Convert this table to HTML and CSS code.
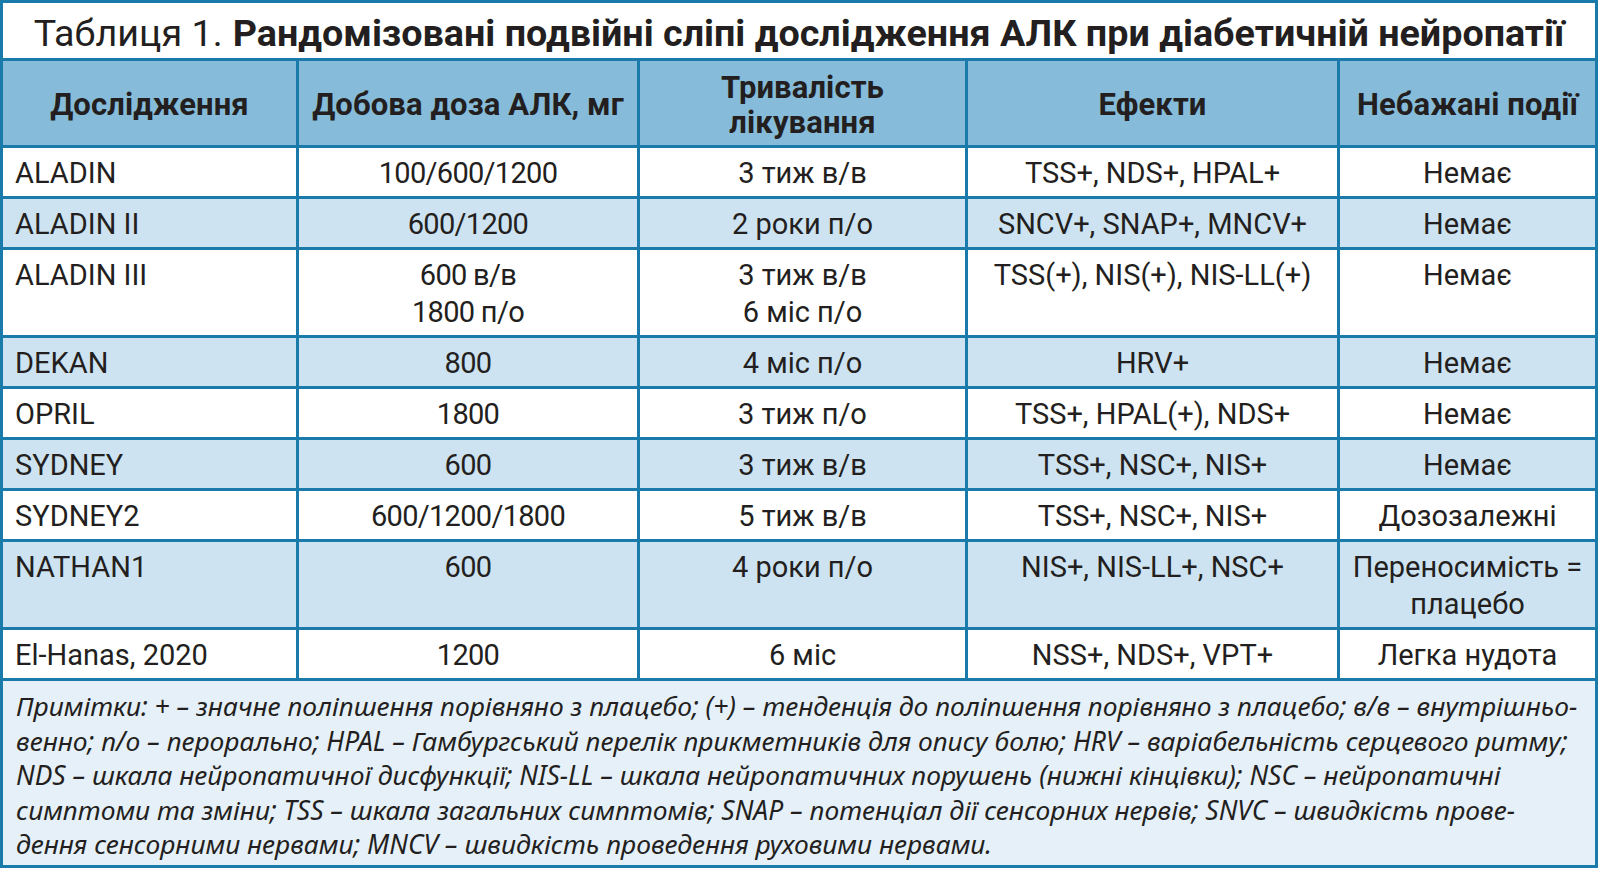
FILE: index.html
```html
<!DOCTYPE html>
<html lang="uk">
<head>
<meta charset="utf-8">
<title>Таблиця 1</title>
<link rel="stylesheet" href="styles.css">
</head>
<body>
<div class="tbl">
  <div class="title"><span class="reg">Таблиця 1.</span> <b>Рандомізовані подвійні сліпі дослідження АЛК при діабетичній нейропатії</b></div>

  <div class="h">Дослідження</div>
  <div class="h">Добова доза АЛК, мг</div>
  <div class="h">Тривалість<br>лікування</div>
  <div class="h">Ефекти</div>
  <div class="h">Небажані події</div>

  <div class="c l">ALADIN</div>
  <div class="c num">100/600/1200</div>
  <div class="c">3 тиж в/в</div>
  <div class="c">TSS+, NDS+, HPAL+</div>
  <div class="c">Немає</div>

  <div class="c l s">ALADIN II</div>
  <div class="c num s">600/1200</div>
  <div class="c s">2 роки п/о</div>
  <div class="c s">SNCV+, SNAP+, MNCV+</div>
  <div class="c s">Немає</div>

  <div class="c l">ALADIN III</div>
  <div class="c num">600 в/в<br>1800 п/о</div>
  <div class="c">3 тиж в/в<br>6 міс п/о</div>
  <div class="c">TSS(+), NIS(+), NIS-LL(+)</div>
  <div class="c">Немає</div>

  <div class="c l s">DEKAN</div>
  <div class="c num s">800</div>
  <div class="c s">4 міс п/о</div>
  <div class="c s">HRV+</div>
  <div class="c s">Немає</div>

  <div class="c l">OPRIL</div>
  <div class="c num">1800</div>
  <div class="c">3 тиж п/о</div>
  <div class="c">TSS+, HPAL(+), NDS+</div>
  <div class="c">Немає</div>

  <div class="c l s">SYDNEY</div>
  <div class="c num s">600</div>
  <div class="c s">3 тиж в/в</div>
  <div class="c s">TSS+, NSC+, NIS+</div>
  <div class="c s">Немає</div>

  <div class="c l">SYDNEY2</div>
  <div class="c num">600/1200/1800</div>
  <div class="c">5 тиж в/в</div>
  <div class="c">TSS+, NSC+, NIS+</div>
  <div class="c">Дозозалежні</div>

  <div class="c l s">NATHAN1</div>
  <div class="c num s">600</div>
  <div class="c s">4 роки п/о</div>
  <div class="c s">NIS+, NIS-LL+, NSC+</div>
  <div class="c s">Переносимість =<br>плацебо</div>

  <div class="c l">El-Hanas, 2020</div>
  <div class="c num">1200</div>
  <div class="c">6 міс</div>
  <div class="c">NSS+, NDS+, VPT+</div>
  <div class="c">Легка нудота</div>

  <div class="notes">Примітки: + – значне поліпшення порівняно з плацебо; (+) – тенденція до поліпшення порівняно з плацебо; в/в – внутрішньо-<br>венно; п/о – перорально; HPAL – Гамбургський перелік прикметників для опису болю; HRV – варіабельність серцевого ритму;<br>NDS – шкала нейропатичної дисфункції; NIS-LL – шкала нейропатичних порушень (нижні кінцівки); NSC – нейропатичні<br>симптоми та зміни; TSS – шкала загальних симптомів; SNAP – потенціал дії сенсорних нервів; SNVC – швидкість прове-<br>дення сенсорними нервами; MNCV – швидкість проведення руховими нервами.</div>
</div>
</body>
</html>
```

FILE: styles.css
```css
html, body {
  margin: 0;
  padding: 0;
  background: #ffffff;
}

body {
  font-family: Roboto, "Noto Sans", sans-serif;
  color: #231f20;
}

.tbl {
  width: 1598px;
  box-sizing: border-box;
  padding: 3px;
  background: #1a7aaa;
  display: grid;
  grid-template-columns: 293px 338px 325px 369px 255px;
  grid-template-rows: 55px 84px auto auto auto auto auto auto auto auto auto auto;
  gap: 3px;
}

.title {
  grid-column: 1 / -1;
  background: #ffffff;
  display: flex;
  align-items: center;
  justify-content: center;
  font-size: 37.7px;
  white-space: nowrap;
  padding-top: 5px;
  box-sizing: border-box;
}

.title .reg {
  font-weight: 400;
  margin-right: 10px;
}

.title b {
  font-weight: 700;
}

.h {
  background: #86bcda;
  display: flex;
  align-items: center;
  justify-content: center;
  text-align: center;
  font-weight: 700;
  font-size: 31px;
  letter-spacing: 0.1px;
  line-height: 35px;
  padding-top: 3px;
}

.c {
  background: #ffffff;
  font-size: 29px;
  line-height: 37px;
  padding: 7px 0 4px;
  text-align: center;
  white-space: nowrap;
}

.c.num {
  letter-spacing: -0.7px;
}

.c.s {
  background: #cee3f1;
}

.c.l {
  text-align: left;
  padding-left: 12px;
}

.notes {
  grid-column: 1 / -1;
  background: #e6f0f8;
  font-family: "Noto Sans", Roboto, sans-serif;
  font-style: italic;
  font-size: 26.4px;
  line-height: 34.6px;
  padding: 8px 0 1px 13px;
  white-space: nowrap;
  height: 184px;
  box-sizing: border-box;
}
```
